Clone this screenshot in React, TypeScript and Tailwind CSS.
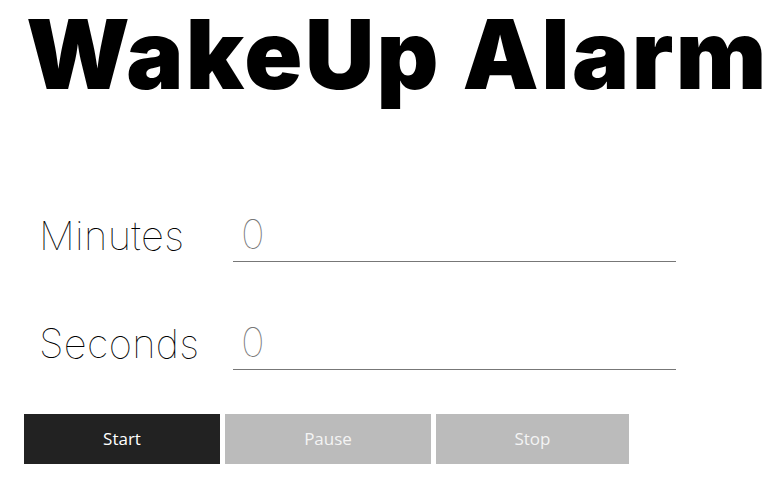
export default function App() {
  return (
    <div className="w-[783px] h-[488px] bg-white overflow-hidden relative">
      <h1 className="font-['Inter',sans-serif] font-black text-[96px] leading-[110px] tracking-[2.4px] text-black pl-[26px] -mt-[1px] whitespace-nowrap">
        WakeUp Alarm
      </h1>
      <div className="flex flex-col pl-[39px] pt-[95px] gap-[50px]">
        <Row label="Minutes" />
        <Row label="Seconds" />
      </div>
      <div className="flex gap-[5px] pl-[24px] pt-[44px]">
        <button className="w-[196px] h-[50px] bg-[#222222] text-white text-[17px] font-['Open_Sans',sans-serif]">
          Start
        </button>
        <button className="w-[206px] h-[50px] bg-[#bbbbbb] text-[#f4f4f4] text-[17px] font-['Open_Sans',sans-serif]">
          Pause
        </button>
        <button className="w-[193px] h-[50px] bg-[#bbbbbb] text-[#f4f4f4] text-[17px] font-['Open_Sans',sans-serif]">
          Stop
        </button>
      </div>
    </div>
  );
}

function Row({ label }: { label: string }) {
  return (
    <div className="flex items-end h-[58px]">
      <label className="w-[194px] font-['Inter',sans-serif] font-thin text-[40px] leading-none tracking-[0.3px] pb-[6px] text-black">
        {label}
      </label>
      <div className="w-[443px] h-[58px] border-b border-[#777777] flex items-end pl-[8px] pb-[6px]">
        <span className="font-['Inter',sans-serif] font-thin text-[40px] leading-none text-[#777777]">
          0
        </span>
      </div>
    </div>
  );
}
